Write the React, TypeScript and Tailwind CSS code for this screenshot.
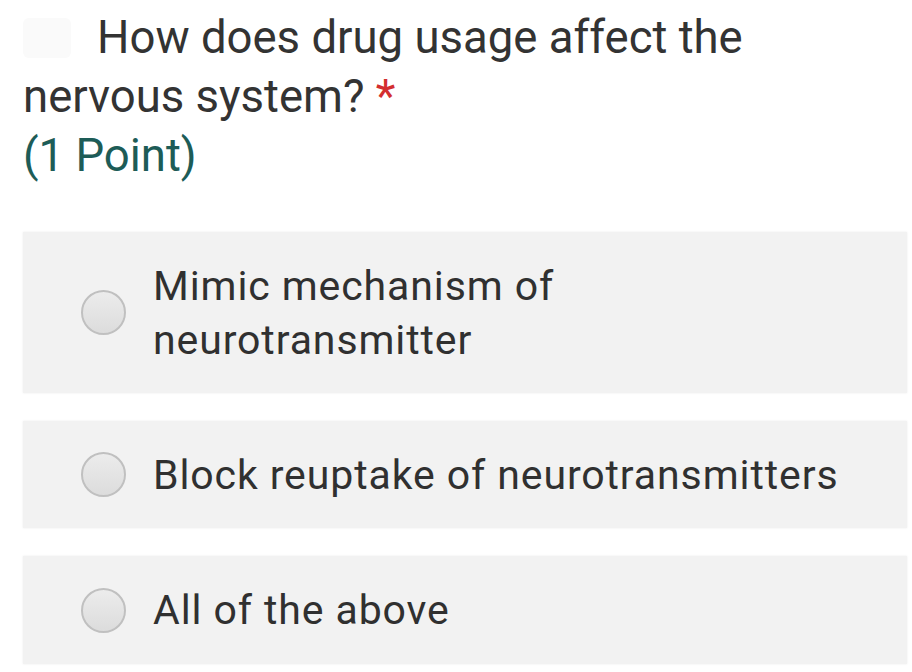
import React from 'react'

const options = [
  { id: 'a', label: 'Mimic mechanism of\nneurotransmitter', h: 'h-[161px]' },
  { id: 'b', label: 'Block reuptake of neurotransmitters', h: 'h-[107px]' },
  { id: 'c', label: 'All of the above', h: 'h-[108px]' },
]

function Radio() {
  return (
    <span className="block w-[45px] h-[45px] shrink-0 rounded-full border-2 border-[#c0c0c0] bg-gradient-to-b from-[#ececec] to-[#dcdcdc]" />
  )
}

export default function App() {
  return (
    <div className="w-[912px] h-[672px] bg-white overflow-hidden" style={{ fontFamily: 'Roboto, "Liberation Sans", sans-serif' }}>
      <div className="pl-[23px] pt-[8px] text-[45.5px] leading-[59px] text-[#333333]">
        <div className="flex items-center">
          {/* faded question number */}
          <span className="inline-block w-[48px] h-[40px] mr-[26px] rounded-md bg-[#fafafa]" />
          <span>How does drug usage affect the</span>
        </div>
        <div>
          nervous system? <span className="text-[#d32f2f]">*</span>
        </div>
        <div className="text-[#1d5c57]">(1 Point)</div>
      </div>

      <div className="mt-[47px] flex flex-col gap-[28px] pl-[23px] pr-[5px]">
        {options.map((o) => (
          <div
            key={o.id}
            className={`${o.h} flex items-center bg-[#f2f2f2] shadow-[0_0_2px_rgba(0,0,0,0.08)] pl-[58px]`}
          >
            <Radio />
            <div className="ml-[27px] text-[41px] tracking-[0.9px] leading-[54px] text-[#303030] whitespace-pre-line">
              {o.label}
            </div>
          </div>
        ))}
      </div>
    </div>
  )
}
